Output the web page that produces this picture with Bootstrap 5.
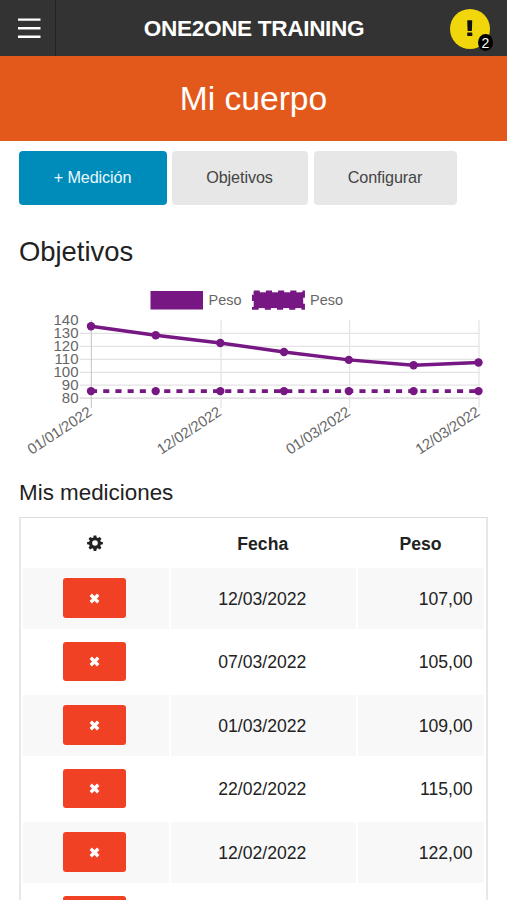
<!DOCTYPE html>
<html lang="es">
<head>
<meta charset="utf-8">
<meta name="viewport" content="width=device-width, initial-scale=1">
<title>Mi cuerpo</title>
<link rel="stylesheet" href="https://cdn.jsdelivr.net/npm/bootstrap@5.3.0/dist/css/bootstrap.min.css">
<style>
html, body { height: 900px; overflow: hidden; }
body { font-family: "Liberation Sans", Arial, sans-serif; color: #222; }
.topbar { height: 56px; background: #333; }
.menu-toggle { width: 56px; border-right: 1px solid #222; padding-left: 2px; }
.brand-name { font-size: 22.6px; letter-spacing: -.34px; padding-top: 1px; padding-left: 1px; }
.alert-slot { width: 56px; }
.alert-dot { width: 40px; height: 40px; background: #f0d60b; margin-top: 2px; margin-left: -.6px; }
.alert-count { right: -2.5px; bottom: -2px; width: 15px; height: 17px; background: #000; font-size: 14px; line-height: 18px; }
.hero-title { height: 85px; background: #e3591c; font-size: 33.6px; padding-top: 1px; }
.actions { padding: 10.4px 19px 0; gap: 5px; }
.action { height: 54px; font-size: 16.2px; letter-spacing: -.1px; color: #444; background: #e7e7e7; border: 0; border-radius: 4px; padding: 0 1px 2px 0; }
.action:hover { background: #ddd; }
.action-add { width: 148px; background: #008cba; color: #e9f8fd; }
.action-add:hover { background: #007ba3; color: #fff; }
.action-goals { width: 136px; }
.action-config { width: 143px; margin-left: 1px; }
.goals-heading { font-size: 27.4px; line-height: 34px; margin: 29.6px 0 0 19px; }
.chart { display: block; margin-top: 9px; }
.list-heading { font-size: 22.4px; line-height: 28px; margin: 0 0 0 19px; padding-top: 1px; }
.measures { width: 469px; margin: 10.5px 0 0 19px; table-layout: fixed; border-collapse: separate; border-spacing: 2px; border: 2px solid #e8e8e8; border-top: 1.5px solid #ddd; font-size: 17.6px; }
.measures th { height: 45.5px; padding: 1px 1px 0 0; text-align: center; }
.measures th svg { margin: -3.5px 0 0; }
.measures td { height: 61.5px; padding: 0 2px 0 0; text-align: center; }
.measures td:last-child { text-align: right; padding-right: 11.5px; }
.measures tbody tr:nth-child(odd) td { background: #f8f8f8; }
.col-a { width: 145.5px; } .col-b { width: 185.5px; }
.remove { width: 63px; height: 39.5px; background: #f04124; border: 0; border-radius: 3px; margin: -1px 0 0; }
.remove svg { margin-top: -2px; }
.remove:hover { background: #cf2a0e; }
</style>
</head>
<body class="bg-white">
<nav class="topbar d-flex text-white">
  <div class="menu-toggle d-flex align-items-center justify-content-center">
    <svg width="24" height="22" viewBox="0 0 24 22" fill="#fff"><path d="M1 1.4h22.5v2.4H1zM1 10h22.5v2.4H1zM1 18.6h22.5V21H1z"/></svg>
  </div>
  <div class="brand-name flex-grow-1 d-flex align-items-center justify-content-center fw-bold">ONE2ONE TRAINING</div>
  <div class="alert-slot d-flex align-items-center">
    <div class="alert-dot rounded-circle position-relative d-flex align-items-center justify-content-center">
      <svg width="8" height="18" viewBox="0 0 8 18" fill="#111"><path d="M1.2.8Q1.2.2 1.8.2h3.8q.6 0 .6.6L5.9 10.4q0 .6-.6.6H2.2q-.6 0-.6-.6zM1.8 12.4h3.9q.6 0 .6.6v2.5q0 .6-.6.6H1.8q-.6 0-.6-.6v-2.5q0-.6.6-.6z"/></svg>
      <span class="alert-count position-absolute rounded-circle text-center text-white">2</span>
    </div>
  </div>
</nav>
<header class="hero-title d-flex align-items-center justify-content-center text-white">Mi cuerpo</header>
<main>
  <div class="actions d-flex">
    <button class="btn action action-add">+ Medición</button>
    <button class="btn action action-goals">Objetivos</button>
    <button class="btn action action-config">Configurar</button>
  </div>
  <h2 class="goals-heading fw-normal">Objetivos</h2>
  <svg class="chart" width="507" height="200" viewBox="0 278 507 200" font-family="Liberation Sans, Arial, sans-serif" font-size="15" fill="#666">
    <rect x="150.5" y="291" width="52.5" height="18.5" fill="#761783"/>
    <text x="208.5" y="305" textLength="33" lengthAdjust="spacingAndGlyphs">Peso</text>
    <rect x="253.7" y="292.3" width="49.5" height="15.8" fill="#761783" stroke="#761783" stroke-width="3.5" stroke-dasharray="6.1 6.1"/>
    <text x="310" y="305" textLength="33" lengthAdjust="spacingAndGlyphs">Peso</text>
    <g stroke="#e3e3e3" stroke-width="1.2">
      <path d="M80 333.4H479.5M80 346.4H479.5M80 359.3H479.5M80 372.3H479.5M80 385.2H479.5"/>
      <path d="M80 398.2H479.5" stroke="#d6d6d6"/>
      <path d="M91.4 320V408" stroke="#ccc"/>
      <path d="M221 320V408M349.6 320V408M479 320V408"/>
    </g>
    <g text-anchor="end">
      <text x="78.5" y="324.5">140</text><text x="78.5" y="337.5">130</text><text x="78.5" y="350.5">120</text><text x="78.5" y="363.5">110</text><text x="78.5" y="376.5">100</text><text x="78.5" y="389.7">90</text><text x="78.5" y="402.7">80</text>
      <text transform="translate(93 414.5) rotate(-33.5)" textLength="73.5">01/01/2022</text>
      <text transform="translate(222.5 414.5) rotate(-33.5)" textLength="73.5">12/02/2022</text>
      <text transform="translate(351.5 414.5) rotate(-33.5)" textLength="73.5">01/03/2022</text>
      <text transform="translate(481 414.5) rotate(-33.5)" textLength="73.5">12/03/2022</text>
    </g>
    <g fill="none" stroke="#761783" stroke-width="3.7">
      <path d="M91 391.1H478.5" stroke-dasharray="6.1 6.1"/>
      <path d="M91 326.2L155.7 335.3L220.3 343L284 352L348.8 359.9L413.6 365.2L478.5 362.5" stroke-width="3.4"/>
    </g>
    <g fill="#761783">
      <circle cx="91" cy="326.2" r="4.2"/><circle cx="155.7" cy="335.3" r="4.2"/><circle cx="220.3" cy="343" r="4.2"/><circle cx="284" cy="352" r="4.2"/><circle cx="348.8" cy="359.9" r="4.2"/><circle cx="413.6" cy="365.2" r="4.2"/><circle cx="478.5" cy="362.5" r="4.2"/>
      <circle cx="91" cy="391.1" r="4.2"/><circle cx="155.7" cy="391.1" r="4.2"/><circle cx="220.3" cy="391.1" r="4.2"/><circle cx="284" cy="391.1" r="4.2"/><circle cx="348.8" cy="391.1" r="4.2"/><circle cx="413.6" cy="391.1" r="4.2"/><circle cx="478.5" cy="391.1" r="4.2"/>
    </g>
  </svg>
  <h3 class="list-heading fw-normal">Mis mediciones</h3>
  <svg class="d-none"><symbol id="cross" viewBox="0 0 10 10"><path d="M1.6 1.6L8.4 8.4M8.4 1.6L1.6 8.4" stroke="#fff" stroke-width="3"/></symbol></svg>
  <table class="measures">
    <colgroup><col class="col-a"><col class="col-b"><col></colgroup>
    <thead><tr>
      <th><svg width="16" height="16" viewBox="-8 -8 16 16" fill="#222"><path fill-rule="evenodd" d="M-1.3-7.5h2.6l.4 2.1 1.2.5 1.8-1.2 1.8 1.8-1.2 1.8.5 1.2 2.1.4v2.2l-2.1.4-.5 1.2 1.2 1.8-1.8 1.8-1.8-1.2-1.2.5-.4 2.1h-2.6l-.4-2.1-1.2-.5-1.8 1.2-1.8-1.8 1.2-1.8-.5-1.2-2.1-.4v-2.2l2.1-.4.5-1.2-1.2-1.8 1.8-1.8 1.8 1.2 1.2-.5zM0-2.8a2.8 2.8 0 1 0 0 5.6a2.8 2.8 0 1 0 0-5.6z"/></svg></th>
      <th>Fecha</th><th>Peso</th>
    </tr></thead>
    <tbody>
      <tr><td><button class="btn remove p-0"><svg width="11" height="11"><use href="#cross"/></svg></button></td><td>12/03/2022</td><td>107,00</td></tr>
      <tr><td><button class="btn remove p-0"><svg width="11" height="11"><use href="#cross"/></svg></button></td><td>07/03/2022</td><td>105,00</td></tr>
      <tr><td><button class="btn remove p-0"><svg width="11" height="11"><use href="#cross"/></svg></button></td><td>01/03/2022</td><td>109,00</td></tr>
      <tr><td><button class="btn remove p-0"><svg width="11" height="11"><use href="#cross"/></svg></button></td><td>22/02/2022</td><td>115,00</td></tr>
      <tr><td><button class="btn remove p-0"><svg width="11" height="11"><use href="#cross"/></svg></button></td><td>12/02/2022</td><td>122,00</td></tr>
      <tr><td><button class="btn remove p-0"><svg width="11" height="11"><use href="#cross"/></svg></button></td><td></td><td></td></tr>
    </tbody>
  </table>
</main>
<script src="https://cdn.jsdelivr.net/npm/bootstrap@5.3.0/dist/js/bootstrap.bundle.min.js"></script>
</body>
</html>
